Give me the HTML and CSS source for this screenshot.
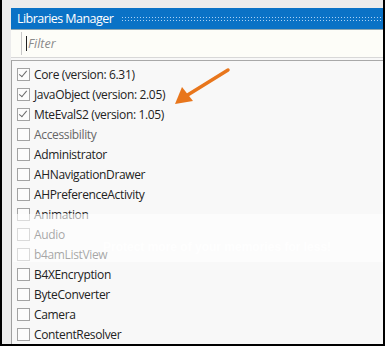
FILE: index.html
```html
<!DOCTYPE html>
<html>
<head>
<meta charset="utf-8">
<link rel="stylesheet" href="styles.css">
</head>
<body>
<div class="frame">
  <div class="panel">
    <div class="titlebar">
      <span class="title">Libraries Manager</span>
      <span class="grip"></span>
    </div>
    <div class="filterbar">
      <div class="filter"><span class="caret"></span><span class="ph">Filter</span></div>
    </div>
    <div class="list">
      <div class="row"><span class="cb checked"></span><span class="lbl">Core (version: 6.31)</span></div>
      <div class="row"><span class="cb checked"></span><span class="lbl">JavaObject (version: 2.05)</span></div>
      <div class="row"><span class="cb checked"></span><span class="lbl">MteEvalS2 (version: 1.05)</span></div>
      <div class="row"><span class="cb"></span><span class="lbl faint">Accessibility</span></div>
      <div class="row"><span class="cb"></span><span class="lbl">Administrator</span></div>
      <div class="row"><span class="cb"></span><span class="lbl">AHNavigationDrawer</span></div>
      <div class="row"><span class="cb"></span><span class="lbl">AHPreferenceActivity</span></div>
      <div class="row"><span class="cb"></span><span class="lbl">Animation</span></div>
      <div class="row"><span class="cb"></span><span class="lbl">Audio</span></div>
      <div class="row"><span class="cb"></span><span class="lbl">b4amListView</span></div>
      <div class="row"><span class="cb"></span><span class="lbl">B4XEncryption</span></div>
      <div class="row"><span class="cb"></span><span class="lbl">ByteConverter</span></div>
      <div class="row"><span class="cb"></span><span class="lbl">Camera</span></div>
      <div class="row"><span class="cb"></span><span class="lbl">ContentResolver</span></div>
    </div>
  </div>
  <div class="wm-band"><span>Protect more of your memories for less!</span></div>
  <svg class="arrow" width="385" height="346" viewBox="0 0 385 346">
    <line x1="228" y1="70" x2="186" y2="96" stroke="#e8761c" stroke-width="3.5" stroke-linecap="round"/>
    <polygon points="175,104 182,87 193,101" fill="#e8761c"/>
  </svg>
</div>
</body>
</html>
```
FILE: styles.css
```css
html, body {
  margin: 0;
  padding: 0;
  background: #fff;
}
.frame {
  position: relative;
  width: 385px;
  height: 346px;
  box-sizing: border-box;
  border-left: 2px solid #000;
  border-right: 2px solid #000;
  border-bottom: 2px solid #000;
  background: #ececec;
  padding: 8px 0 0 9px;
  overflow: hidden;
  font-family: "Open Sans", "Noto Sans", sans-serif;
}
.panel {
  display: flex;
  flex-direction: column;
  height: 100%;
  background: #f8f8f8;
}
.titlebar {
  height: 22px;
  background: #0a72c6;
  display: flex;
  align-items: center;
  padding-left: 6px;
  gap: 8px;
}
.title {
  color: #fff;
  font-size: 12.5px;
  letter-spacing: -0.55px;
  white-space: nowrap;
}
.grip {
  flex: 1;
  height: 6px;
  background-image: radial-gradient(circle, rgba(190, 220, 250, 0.9) 0.7px, transparent 0.9px);
  background-size: 3px 3px;
}
.filterbar {
  height: 30px;
  background: #fdfdf8;
  border-top: 1px solid #8fa7b3;
  box-sizing: border-box;
  padding: 2px 0 0 10px;
  border-bottom: 1px solid #d8d8d8;
}
.filter {
  height: 23px;
  border-left: 1px solid #c8c8c8;
  display: flex;
  align-items: center;
  padding-left: 4px;
}
.caret {
  width: 1px;
  height: 15px;
  background: #222;
  margin-right: 1px;
}
.ph {
  font-style: italic;
  color: #8a8a8a;
  font-size: 12.5px;
}
.list {
  flex: 1;
  margin-top: 2px;
  border-top: 1px solid #a8a8a8;
  border-left: 1px solid #a0a0a0;
  background: #f8f8f8;
  padding-top: 3px;
  display: flex;
  flex-direction: column;
}
.row {
  height: 20px;
  display: flex;
  align-items: center;
  padding-left: 5px;
  gap: 4px;
}
.cb {
  width: 11px;
  height: 11px;
  border: 1px solid #a3a3a3;
  background: #fcfcfc;
  position: relative;
  flex: none;
}
.cb.checked::after {
  content: "";
  position: absolute;
  left: 3px;
  top: 0px;
  width: 3px;
  height: 7px;
  border-right: 1.6px solid #6a6a6a;
  border-bottom: 1.6px solid #6a6a6a;
  transform: rotate(40deg);
}
.lbl {
  font-size: 12px;
  color: #222;
  white-space: nowrap;
  letter-spacing: -0.35px;
}
.lbl.faint {
  color: #666;
}
.wm-band {
  position: absolute;
  left: 11px;
  right: 0;
  top: 214px;
  height: 48px;
  background: rgba(255, 255, 255, 0.6);
  display: flex;
  align-items: flex-end;
  padding-left: 90px;
  box-sizing: border-box;
}
.wm-band span {
  font-family: "Liberation Sans", sans-serif;
  font-weight: bold;
  font-size: 12px;
  color: rgba(255, 255, 255, 0.85);
  white-space: nowrap;
  padding-bottom: 8px;
}
.arrow {
  position: absolute;
  left: -2px;
  top: 0;
}
```
